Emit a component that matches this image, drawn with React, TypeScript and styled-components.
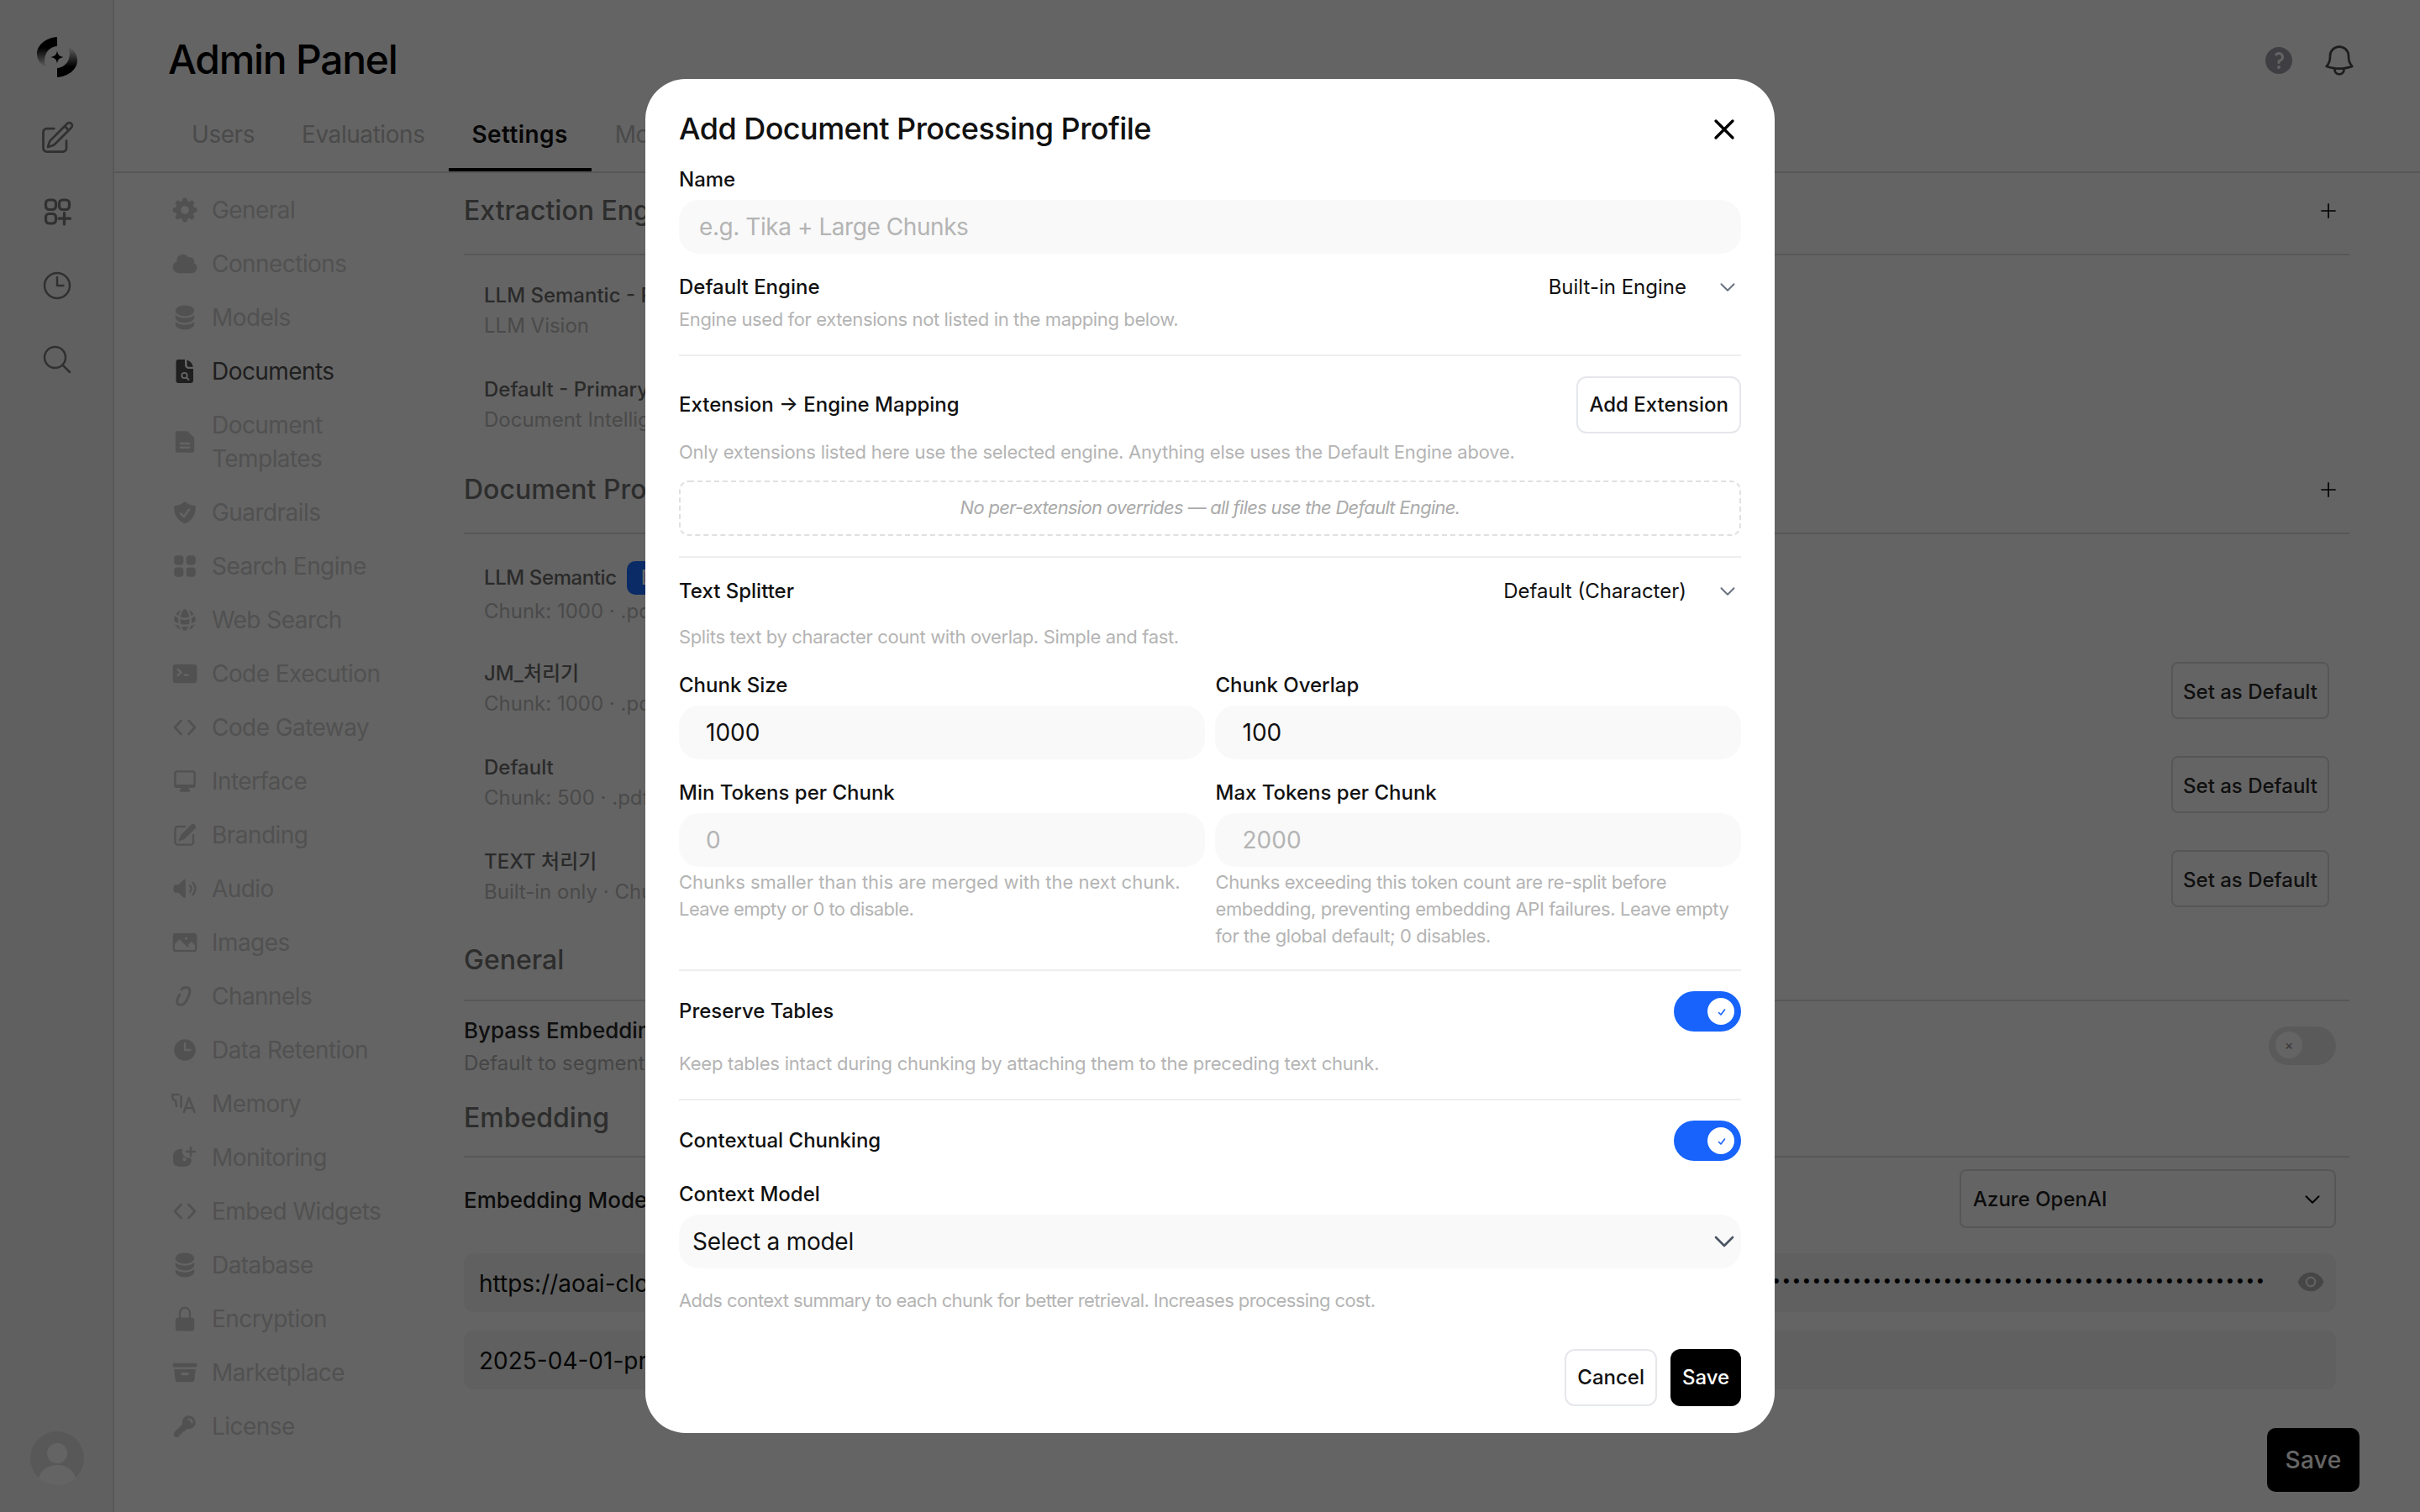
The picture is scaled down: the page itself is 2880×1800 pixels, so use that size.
import React from "react";
import styled, { createGlobalStyle } from "styled-components";
import {
  HiMiniCog8Tooth, HiMiniCloud, HiMiniCircleStack, HiMiniDocumentText,
  HiMiniShieldCheck, HiMiniSquares2X2, HiMiniGlobeAlt, HiMiniCommandLine,
  HiMiniComputerDesktop, HiMiniPencilSquare, HiMiniSpeakerWave, HiMiniPhoto, HiMiniClock,
  HiMiniLockClosed, HiMiniArchiveBox, HiMiniKey, HiMiniQuestionMarkCircle,
  HiMiniEye, HiOutlineBell, HiOutlinePlus, HiOutlinePencilSquare, HiOutlineClock, HiOutlineMagnifyingGlass,
  HiOutlineChevronDown, HiOutlineXMark,
} from "react-icons/hi2";

const Global = createGlobalStyle`
  html, body { margin: 0; padding: 0; background: #fbfbfb; }
  * { box-sizing: border-box; }
  body { font-family: Inter, "Noto Sans CJK KR", sans-serif; width: 2880px; height: 1800px; overflow: hidden; }
  input { font-family: inherit; }
`;

const Stage = styled.div`width: 1440px; height: 900px; transform: scale(2); transform-origin: 0 0; position: relative; overflow: hidden;`;
const Page = styled.div`display: flex; width: 1440px; height: 900px; overflow: hidden; background: #fbfbfb;`;

const Rail = styled.aside`
  width: 68px; flex: none; background: #eef0ee; border-right: 1px solid #dadada;
  display: flex; flex-direction: column; align-items: center; padding: 22px 0 0 1px; color: #787878;
`;
const RailLogo = styled.div`width: 24px; height: 24px; margin-bottom: 25px; display: flex;`;
const RailButton = styled.div`width: 22px; height: 22px; margin-bottom: 22px; display: flex; align-items: center; justify-content: center;`;
const Avatar = styled.div`margin-top: auto; margin-bottom: 16px; width: 32px; height: 32px; display: flex;`;

const Main = styled.main`flex: 1; min-width: 0; display: flex; flex-direction: column;`;
const Header = styled.header`height: 103px; flex: none; border-bottom: 1px solid #dadada; display: flex; flex-direction: column; padding-left: 32px;`;
const TitleRow = styled.div`height: 71px; flex: none; display: flex; align-items: flex-start; justify-content: space-between; padding: 22px 37px 0 0;`;
const PageTitle = styled.h1`margin: 0; font-size: 24px; line-height: 27px; font-weight: 500; letter-spacing: -0.65px; color: #000;`;
const TopIcons = styled.div`display: flex; gap: 15px; align-items: center; margin-top: 3px; color: #9d9da9;`;
const BellWrap = styled.span`display: flex; color: #4a4a4a;`;
const Tabs = styled.nav`display: flex; height: 31px;`;
const Tab = styled.div<{ $active?: boolean }>`
  padding: 0 14px; font-size: 14px; line-height: 17px; height: 31px;
  letter-spacing: ${(p) => (p.$active ? "0.2px" : "-0.22px")};
  font-weight: ${(p) => (p.$active ? 600 : 400)}; color: ${(p) => (p.$active ? "#111" : "#b8b8b8")};
  border-bottom: ${(p) => (p.$active ? "2px solid #000" : "none")};
`;

const Body = styled.div`flex: 1; min-height: 0; display: flex;`;
const SideNav = styled.nav`width: 208px; flex: none; padding: 6px 0 0 34px; display: flex; flex-direction: column;`;
const NavItem = styled.div<{ $active?: boolean }>`
  display: flex; align-items: center; gap: 8px; padding: 6px 0; line-height: 20px; font-size: 14px; flex: none; width: 132px; letter-spacing: -0.28px;
  color: ${(p) => (p.$active ? "#4e4e4e" : "#cacaca")};
`;
const NavIcon = styled.span`width: 16px; height: 16px; flex: none; display: flex; align-items: center; justify-content: center;`;

const Content = styled.div`width: 1128px; flex: none; padding: 12px 0 0 0; display: flex; flex-direction: column;`;
const Section = styled.section<{ $top?: number }>`margin-top: ${(p) => p.$top ?? 0}px; width: 1121.5px;`;
const SectionHead = styled.div<{ $pad?: number }>`
  display: flex; align-items: center; justify-content: space-between;
  font-size: 16px; line-height: 21px; font-weight: 500; color: #707070;
  padding: 0 6px 0 0; padding-bottom: ${(p) => p.$pad ?? 15}px; border-bottom: 1px solid #dadada;
`;
const PlusIcon = styled.span`display: flex; color: #000;`;
const List = styled.div<{ $top: number; $gap?: number }>`margin-top: ${(p) => p.$top}px; display: flex; flex-direction: column; gap: ${(p) => p.$gap ?? 20}px; padding: 0 11.5px 0 12px;`;
const ListRow = styled.div`display: flex; align-items: flex-start; justify-content: space-between;`;
const RowTitle = styled.div`display: flex; align-items: center; gap: 8px; margin-bottom: 1px; font-size: 12px; line-height: 17px; font-weight: 500; color: #6a6a6a;`;
const BadgeTitle = styled(RowTitle)`height: 21px; margin-bottom: 0; gap: 6px; align-items: flex-start; line-height: 20px; letter-spacing: -0.2px;`;
const RowSub = styled.div`font-size: 12px; line-height: 17px; color: #b8b8b8;`;
const Badge = styled.span`height: 20px; padding: 0 8.5px; border-radius: 5px; background: #1b6bff; color: #fff; font-size: 12px; line-height: 20px;`;
const SetDefault = styled.div`height: 34px; width: 94px; margin-top: 2px; border: 1px solid #d8d8d8; border-radius: 4px; display: flex; align-items: center; justify-content: center; font-size: 12px; font-weight: 500; color: #2a2a2a;`;

const BypassRow = styled.div`margin-top: 7px; padding-right: 7.5px; display: flex; align-items: center; justify-content: space-between;`;
const BypassTitle = styled.div`font-size: 13px; line-height: 20px; font-weight: 500; color: #262626;`;
const BypassSub = styled.div`font-size: 12px; line-height: 18px; margin-top: 1.5px; color: #aeaeae;`;
const OffToggle = styled.div`width: 40px; height: 23.5px; border-radius: 12px; background: #e2e2e2; padding: 4px; display: flex; align-items: center;`;
const OffKnob = styled.div`width: 16px; height: 16px; border-radius: 50%; background: #fbfbfb; color: #8a8a8a; font-size: 8px; line-height: 16px; text-align: center;`;
const ModelRow = styled.div`margin-top: 7.5px; padding-right: 7.5px; display: flex; align-items: center; justify-content: space-between;`;
const ModelTitle = styled.div`font-size: 13px; line-height: 20px; font-weight: 500; color: #1e1e1e;`;
const ProviderSelect = styled.div`width: 224px; height: 35px; border: 1px solid #d8d8d8; border-radius: 4px; padding: 0 7px; display: flex; align-items: center; justify-content: space-between; font-size: 12px; font-weight: 500; color: #1e1e1e;`;
const Fields = styled.div`margin-top: 14.5px; padding-right: 7.5px; display: flex; flex-direction: column; gap: 11.5px;`;
const FieldBox = styled.div`height: 35px; background: #eef0ee; border-radius: 6px; padding: 0 9px; display: flex; align-items: center; font-size: 14px; color: #111; overflow: hidden;`;
const FieldText = styled.span`flex: 1; white-space: nowrap;`;
const Dots = styled.span`white-space: nowrap; overflow: hidden; width: 700px; text-align: right; margin-right: 18px; margin-top: -2px; direction: rtl; font-family: "Liberation Sans", sans-serif; font-size: 11px; letter-spacing: 2.15px; color: #000;`;
const EyeIcon = styled.span`display: flex; color: #b0b0b0; margin-right: -2px; margin-top: -1px;`;
const PageFooter = styled.div`margin-top: 22.5px; display: flex; justify-content: flex-end;`;
const PageSave = styled.div`width: 55px; height: 38px; border-radius: 5px; background: #000; color: #fff; display: flex; align-items: center; justify-content: center; font-size: 14px; font-weight: 500; letter-spacing: 0.2px;`;

const Overlay = styled.div`position: absolute; inset: 0; background: rgba(0, 0, 0, 0.6); display: flex; align-items: center; justify-content: center;`;
const Modal = styled.div`width: 672px; background: #fff; border-radius: 24px; padding: 18px 20px 16px; display: flex; flex-direction: column; color: #000;`;
const ModalHead = styled.div`height: 24px; display: flex; align-items: center; justify-content: space-between;`;
const ModalTitle = styled.h2`margin: 0; padding-top: 0.5px; font-size: 18px; line-height: 24px; font-weight: 500; letter-spacing: -0.27px; color: #111;`;
const CloseIcon = styled.span`display: flex; color: #000;`;
const Label = styled.div<{ $top?: number }>`margin-top: ${(p) => p.$top ?? 0}px; font-size: 12px; line-height: 18px; font-weight: 500; color: #111;`;
const TextField = styled.input<{ $top?: number }>`
  display: block; width: 100%; height: 32px; margin-top: ${(p) => p.$top ?? 3}px; border: none; outline: none; background: #f9f9f9;
  border-radius: 12px; font-size: 14px; letter-spacing: -0.22px; color: #111; padding: 0 12px 1px;
  &::placeholder { color: #b4b4b4; opacity: 1; }
`;
const NumberField = styled(TextField)`padding: 0 16px 1px; letter-spacing: 0;`;
const SelectRow = styled.div<{ $top?: number }>`margin-top: ${(p) => p.$top ?? 0}px; display: flex; align-items: center; justify-content: space-between;`;
const InlineSelect = styled.div`display: flex; align-items: center; gap: 18px; font-size: 12px; line-height: 18px; color: #111; padding-right: 2.5px;`;
const ChevronIcon = styled.span<{ $tone?: string }>`display: flex; color: ${(p) => p.$tone ?? "#6b7280"};`;
const Hint = styled.div<{ $top?: number; $ls?: number }>`margin-top: ${(p) => p.$top ?? 0}px; font-size: 11px; line-height: 16px; color: #b4b4b4; letter-spacing: ${(p) => p.$ls ?? 0}px;`;
const TightLine = styled.span`letter-spacing: -0.28px;`;
const Divider = styled.hr<{ $top: number }>`margin: ${(p) => p.$top}px 0 0; border: none; height: 1px; background: #eeeeee; flex: none;`;
const GhostButton = styled.button`height: 34px; border: 1px solid #e5e7eb; background: #fff; border-radius: 6px; padding: 0 6.5px 1px; font-family: inherit; font-size: 12px; font-weight: 500; color: #111;`;
const MappingRow = styled.div`margin-top: 12px; display: flex; align-items: center; justify-content: space-between;`;
const EmptyBox = styled.div`margin-top: 9px; height: 33px; border: 1px dashed #e0e0e0; border-radius: 6px; padding-bottom: 1px; display: flex; align-items: center; justify-content: center; font-size: 11px; font-style: italic; letter-spacing: -0.36px; color: #aaa;`;
const FieldGrid = styled.div<{ $top: number }>`margin-top: ${(p) => p.$top}px; display: grid; grid-template-columns: 1fr 1fr; column-gap: 6.5px;`;
const ToggleRow = styled.div`margin-top: 12px; display: flex; align-items: center; justify-content: space-between;`;
const Toggle = styled.div`width: 40px; height: 24px; border-radius: 12px; background: #1763fb; padding: 4px; display: flex; justify-content: flex-end; align-items: center;`;
const Knob = styled.div`width: 16px; height: 16px; border-radius: 50%; background: #fff; color: #1763fb; display: flex; align-items: center; justify-content: center;`;
const ModelSelect = styled.div`margin-top: 3px; height: 32px; border-radius: 12px; background: #f9f9f9; padding: 0 2px 1px 8px; display: flex; align-items: center; justify-content: space-between; font-size: 14px; letter-spacing: -0.13px; color: #111;`;
const ModalFooter = styled.div`margin-top: 21px; display: flex; justify-content: flex-end; gap: 8px;`;
const SaveButton = styled.button`height: 34px; width: 42px; border: none; background: #000; color: #fff; border-radius: 6px; padding: 0 0 1px; font-family: inherit; font-size: 12px; font-weight: 500;`;

type IconProps = { size?: number };

const ChannelIcon = ({ size = 16 }: IconProps) => (
  <svg width={size} height={size} viewBox="0 0 32 32" fill="none" stroke="currentColor" strokeWidth="3" strokeLinecap="round">
    <path d="M12 8C15 4 22 5 22 9C22 12 20 20 15 25C12 27 8 27 7 24C6 21 8 17 10 14" />
  </svg>
);
const MemoryIcon = ({ size = 16 }: IconProps) => (
  <svg width={size} height={size} viewBox="0 0 32 32" fill="none" stroke="currentColor" strokeWidth="2.6" strokeLinecap="round" strokeLinejoin="round">
    <path d="M1 5H9M3 5C0 7 1 12 5 12L6 19" />
    <path d="M11.5 7V20" />
    <path d="M15 26L21 9L27.5 26M17.5 21H25" />
  </svg>
);
const MonitorIcon = ({ size = 16 }: IconProps) => (
  <svg width={size} height={size} viewBox="0 0 32 32">
    <path fill="currentColor" d="M13 5.5C6 6 2 9 2 14V20C2 25 6 27 12 27H15C20 27 24 24 24 19C24 17 22 16 20 16C16 16 13 13 13 9Z" />
    <circle cx="15.5" cy="18" r="2.2" fill="#fbfbfb" />
    <path d="M23 4V14M18 9H28" stroke="currentColor" strokeWidth="2.6" strokeLinecap="round" fill="none" />
  </svg>
);
const ChevronsIcon = ({ size = 16 }: IconProps) => (
  <svg width={size} height={size} viewBox="0 0 32 32" fill="none" stroke="currentColor" strokeWidth="2.8" strokeLinecap="round" strokeLinejoin="round">
    <path d="M11.5 8L4 16L11.5 24" />
    <path d="M20.5 8L28 16L20.5 24" />
  </svg>
);
const DocSearchIcon = ({ size = 16 }: IconProps) => (
  <svg width={size} height={size} viewBox="0 0 32 32">
    <path fill="currentColor" d="M8 2H16V8C16 11 18 13 21 13H26V27C26 29 24.5 30 23 30H8C6.5 30 5.5 29 5.5 27V5C5.5 3 6.5 2 8 2Z" />
    <path fill="currentColor" d="M18.5 2.5C22 3.5 25 7 25.8 10.8H21C19.5 10.8 18.5 9.8 18.5 8.2Z" />
    <circle cx="15.5" cy="21" r="3.2" fill="none" stroke="#fbfbfb" strokeWidth="1.8" />
    <path d="M18 23.5L20.5 26" stroke="#fbfbfb" strokeWidth="1.8" strokeLinecap="round" />
  </svg>
);

const navItems: [React.ComponentType<IconProps>, string, boolean?][] = [
  [HiMiniCog8Tooth, "General"], [HiMiniCloud, "Connections"], [HiMiniCircleStack, "Models"],
  [DocSearchIcon, "Documents", true], [HiMiniDocumentText, "Document Templates"],
  [HiMiniShieldCheck, "Guardrails"], [HiMiniSquares2X2, "Search Engine"], [HiMiniGlobeAlt, "Web Search"],
  [HiMiniCommandLine, "Code Execution"], [ChevronsIcon, "Code Gateway"], [HiMiniComputerDesktop, "Interface"],
  [HiMiniPencilSquare, "Branding"], [HiMiniSpeakerWave, "Audio"], [HiMiniPhoto, "Images"], [ChannelIcon, "Channels"],
  [HiMiniClock, "Data Retention"], [MemoryIcon, "Memory"], [MonitorIcon, "Monitoring"],
  [ChevronsIcon, "Embed Widgets"], [HiMiniCircleStack, "Database"], [HiMiniLockClosed, "Encryption"],
  [HiMiniArchiveBox, "Marketplace"], [HiMiniKey, "License"],
];

const Logo = () => (
  <svg width="24" height="24" viewBox="0 0 48 48">
    <defs>
      <linearGradient id="lg" x1="0.5" y1="0" x2="0.5" y2="1">
        <stop offset="0.35" stopColor="#000" />
        <stop offset="1" stopColor="#000" stopOpacity="0" />
      </linearGradient>
    </defs>
    <path d="M24 0C10 1 0 10 0 20C0 27 4 33 11 36C6 26 11 12 24 11Z" fill="url(#lg)" />
    <path d="M24 0C10 1 0 10 0 20C0 27 4 33 11 36C6 26 11 12 24 11Z" fill="url(#lg)" transform="rotate(180 24 24)" />
    <path d="M24 16.5C25 21.5 26.5 23 31.5 24C26.5 25 25 26.5 24 31.5C23 26.5 21.5 25 16.5 24C21.5 23 23 21.5 24 16.5Z" fill="#000" />
  </svg>
);

const AppsIcon = () => (
  <svg width="22" height="22" viewBox="0 0 44 44" fill="none" stroke="currentColor" strokeWidth="3.2" strokeLinecap="round">
    <rect x="8.5" y="8" width="12" height="11.5" rx="4" />
    <rect x="24.5" y="8" width="12" height="11.5" rx="4" />
    <rect x="8.5" y="24.5" width="12" height="11.5" rx="4" />
    <path d="M30.5 23.5V37M24 30.2H37.5" />
  </svg>
);

const AvatarArt = () => (
  <svg width="32" height="32" viewBox="0 0 64 64">
    <circle cx="32" cy="32" r="32" fill="#dcdcdc" />
    <circle cx="32" cy="26" r="12" fill="#fbfbfb" />
    <path d="M10 56C12 46 22 40 32 40C42 40 52 46 54 56C48 61 40 64 32 64C24 64 16 61 10 56Z" fill="#fbfbfb" />
  </svg>
);

const Check = () => (
  <svg width="7" height="7" viewBox="0 0 14 14" fill="none" stroke="currentColor" strokeWidth="1.6" strokeLinecap="round" strokeLinejoin="round">
    <path d="M3.5 7.5L6 10L10.5 4" />
  </svg>
);

const profiles = [
  { name: "JM_처리기", sub: "Chunk: 1000 · .pdf" },
  { name: "Default", sub: "Chunk: 500 · .pdf" },
  { name: "TEXT 처리기", sub: "Built-in only · Chunk: 1000" },
];

export default function App() {
  return (
    <>
      <Global />
      <Stage>
        <Page>
          <Rail>
            <RailLogo><Logo /></RailLogo>
            <RailButton><HiOutlinePencilSquare size={22} /></RailButton>
            <RailButton><AppsIcon /></RailButton>
            <RailButton><HiOutlineClock size={20} /></RailButton>
            <RailButton><HiOutlineMagnifyingGlass size={20} /></RailButton>
            <Avatar><AvatarArt /></Avatar>
          </Rail>
          <Main>
            <Header>
              <TitleRow>
                <PageTitle>Admin Panel</PageTitle>
                <TopIcons>
                  <HiMiniQuestionMarkCircle size={20} />
                  <BellWrap><HiOutlineBell size={22} /></BellWrap>
                </TopIcons>
              </TitleRow>
              <Tabs>
                <Tab>Users</Tab>
                <Tab>Evaluations</Tab>
                <Tab $active>Settings</Tab>
                <Tab>Models</Tab>
              </Tabs>
            </Header>
            <Body>
              <SideNav>
                {navItems.map(([Icon, label, active]) => (
                  <NavItem key={label} $active={active}>
                    <NavIcon><Icon size={16} /></NavIcon>
                    <span>{label}</span>
                  </NavItem>
                ))}
              </SideNav>
              <Content>
                <Section>
                  <SectionHead>
                    <span>Extraction Engines</span>
                    <PlusIcon><HiOutlinePlus size={13} /></PlusIcon>
                  </SectionHead>
                  <List $top={15} $gap={20.5}>
                    <div>
                      <RowTitle>LLM Semantic - Primary</RowTitle>
                      <RowSub>LLM Vision</RowSub>
                    </div>
                    <div>
                      <RowTitle>Default - Primary</RowTitle>
                      <RowSub>Document Intelligence</RowSub>
                    </div>
                  </List>
                </Section>
                <Section $top={23.5}>
                  <SectionHead>
                    <span>Document Processing Profiles</span>
                    <PlusIcon><HiOutlinePlus size={13} /></PlusIcon>
                  </SectionHead>
                  <List $top={16}>
                    <ListRow>
                      <div>
                        <BadgeTitle>LLM Semantic <Badge>Default</Badge></BadgeTitle>
                        <RowSub>Chunk: 1000 · .pdf</RowSub>
                      </div>
                    </ListRow>
                    {profiles.map((p) => (
                      <ListRow key={p.name}>
                        <div>
                          <RowTitle>{p.name}</RowTitle>
                          <RowSub>{p.sub}</RowSub>
                        </div>
                        <SetDefault>Set as Default</SetDefault>
                      </ListRow>
                    ))}
                  </List>
                </Section>
                <Section $top={21}>
                  <SectionHead $pad={12.5}><span>General</span></SectionHead>
                  <BypassRow>
                    <div>
                      <BypassTitle>Bypass Embedding and Retrieval</BypassTitle>
                      <BypassSub>Default to segmented retrieval</BypassSub>
                    </div>
                    <OffToggle><OffKnob>×</OffKnob></OffToggle>
                  </BypassRow>
                </Section>
                <Section $top={12.5}>
                  <SectionHead $pad={12}><span>Embedding</span></SectionHead>
                  <ModelRow>
                    <ModelTitle>Embedding Model Engine</ModelTitle>
                    <ProviderSelect>
                      <span>Azure OpenAI</span>
                      <ChevronIcon $tone="#000"><HiOutlineChevronDown size={12} strokeWidth={2} /></ChevronIcon>
                    </ProviderSelect>
                  </ModelRow>
                  <Fields>
                    <FieldBox>
                      <FieldText>https://aoai-cloud.openai.azure.com</FieldText>
                      <Dots>{"•".repeat(100)}</Dots>
                      <EyeIcon><HiMiniEye size={16} /></EyeIcon>
                    </FieldBox>
                    <FieldBox><FieldText>2025-04-01-preview</FieldText></FieldBox>
                  </Fields>
                </Section>
                <PageFooter><PageSave>Save</PageSave></PageFooter>
              </Content>
            </Body>
          </Main>
        </Page>
        <Overlay>
          <Modal>
            <ModalHead>
              <ModalTitle>Add Document Processing Profile</ModalTitle>
              <CloseIcon><HiOutlineXMark size={20} strokeWidth={2} /></CloseIcon>
            </ModalHead>
            <Label $top={9}>Name</Label>
            <TextField placeholder="e.g. Tika + Large Chunks" readOnly />
            <SelectRow $top={11}>
              <Label>Default Engine</Label>
              <InlineSelect>Built-in Engine <ChevronIcon><HiOutlineChevronDown size={12} strokeWidth={2} /></ChevronIcon></InlineSelect>
            </SelectRow>
            <Hint $top={2} $ls={-0.19}>Engine used for extensions not listed in the mapping below.</Hint>
            <Divider $top={13} />
            <MappingRow>
              <Label>Extension → Engine Mapping</Label>
              <GhostButton>Add Extension</GhostButton>
            </MappingRow>
            <Hint $top={3} $ls={-0.115}>Only extensions listed here use the selected engine. Anything else uses the Default Engine above.</Hint>
            <EmptyBox>No per-extension overrides — all files use the Default Engine.</EmptyBox>
            <Divider $top={12} />
            <SelectRow $top={11}>
              <Label>Text Splitter</Label>
              <InlineSelect>Default (Character) <ChevronIcon><HiOutlineChevronDown size={12} strokeWidth={2} /></ChevronIcon></InlineSelect>
            </SelectRow>
            <Hint $top={10} $ls={-0.18}>Splits text by character count with overlap. Simple and fast.</Hint>
            <FieldGrid $top={12}>
              <div>
                <Label>Chunk Size</Label>
                <NumberField defaultValue="1000" readOnly />
              </div>
              <div>
                <Label>Chunk Overlap</Label>
                <NumberField defaultValue="100" readOnly />
              </div>
            </FieldGrid>
            <FieldGrid $top={11}>
              <div>
                <Label>Min Tokens per Chunk</Label>
                <NumberField placeholder="0" readOnly />
                <Hint $top={1}>Chunks smaller than this are merged with the next chunk. <TightLine>Leave empty or 0 to disable.</TightLine></Hint>
              </div>
              <div>
                <Label>Max Tokens per Chunk</Label>
                <NumberField placeholder="2000" readOnly />
                <Hint $top={1} $ls={-0.2}>Chunks exceeding this token count are re-split before embedding, preventing embedding API failures. Leave empty for the global default; 0 disables.</Hint>
              </div>
            </FieldGrid>
            <Divider $top={12} />
            <ToggleRow>
              <Label>Preserve Tables</Label>
              <Toggle><Knob><Check /></Knob></Toggle>
            </ToggleRow>
            <Hint $top={11} $ls={-0.11}>Keep tables intact during chunking by attaching them to the preceding text chunk.</Hint>
            <Divider $top={13} />
            <ToggleRow>
              <Label>Contextual Chunking</Label>
              <Toggle><Knob><Check /></Knob></Toggle>
            </ToggleRow>
            <Label $top={11}>Context Model</Label>
            <ModelSelect>
              <span>Select a model</span>
              <ChevronIcon $tone="#4b5563"><HiOutlineChevronDown size={16} strokeWidth={2} /></ChevronIcon>
            </ModelSelect>
            <Hint $top={11} $ls={-0.3}>Adds context summary to each chunk for better retrieval. Increases processing cost.</Hint>
            <ModalFooter>
              <GhostButton>Cancel</GhostButton>
              <SaveButton>Save</SaveButton>
            </ModalFooter>
          </Modal>
        </Overlay>
      </Stage>
    </>
  );
}
